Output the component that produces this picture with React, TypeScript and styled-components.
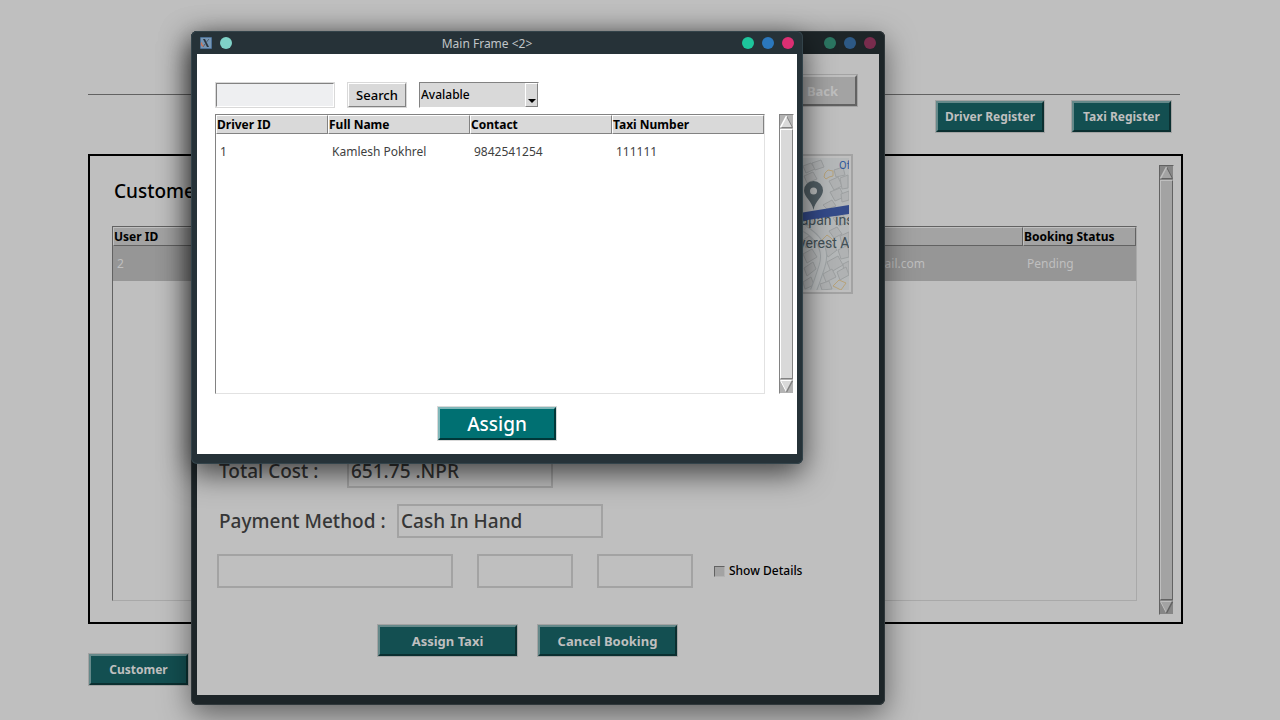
import React from "react";
import styled, { createGlobalStyle, css } from "styled-components";

interface Palette {
  face: string;
  light: string;
  dark: string;
  trough: string;
  frame: string;
  base: string;
}

const active: Palette = {
  face: "#d9d9d9",
  light: "#ffffff",
  dark: "#828282",
  trough: "#b3b3b3",
  frame: "#e2e2e2",
  base: "#ffffff",
};

const dimmed: Palette = {
  face: "#a3a3a3",
  light: "#bfbfbf",
  dark: "#626262",
  trough: "#868686",
  frame: "#a9a9a9",
  base: "#bfbfbf",
};

const GlobalStyle = createGlobalStyle`
  *, *::before, *::after { box-sizing: border-box; }
  body {
    margin: 0;
    background: #bfbfbf;
    color: #000;
    font-family: "Noto Sans", sans-serif;
    font-size: 12px;
    line-height: 16px;
  }
  button, input, select { font: inherit; color: inherit; margin: 0; border-radius: 0; }
`;

const Desktop = styled.div`
  position: relative;
  min-height: 100vh;
  overflow: hidden;
`;

const Page = styled.main`
  display: flex;
  flex-direction: column;
  padding: 0 97px 34px 88px;
`;

const PageHeader = styled.header`
  height: 95px;
  margin-right: 3px;
  border-bottom: 1px solid #626262;
`;

const Actions = styled.nav`
  display: flex;
  justify-content: flex-end;
  gap: 26px;
  padding: 5px 11px 21px 0;
`;

const TealButton = styled.button<{ $width: number; $size?: number; $weight?: number; $live?: boolean }>`
  width: ${(p) => p.$width}px;
  height: ${(p) => (p.$live ? 33 : 31)}px;
  margin: 1px;
  padding: 0;
  border: 2px solid;
  border-color: ${(p) =>
    p.$live ? "#7fb7b9 #003839 #003839 #7fb7b9" : "#65898a #0b2f30 #0b2f30 #65898a"};
  outline: 1px solid ${(p) => (p.$live ? "#d9d9d9" : "#a3a3a3")};
  background: ${(p) => (p.$live ? "#007072" : "#134f51")};
  color: ${(p) => (p.$live ? "#fff" : "#bfbfbf")};
  font-size: ${(p) => p.$size ?? 12}px;
  font-weight: ${(p) => p.$weight ?? 700};
  line-height: 20px;
`;

const Panel = styled.section`
  display: flex;
  gap: 22px;
  padding: 9px 7px 7px 22px;
  border: 2px solid #000;
`;

const PanelBody = styled.div`
  flex: 1;
  display: flex;
  flex-direction: column;
  padding-bottom: 14px;
`;

const PanelTitle = styled.h1`
  margin: 0 0 9px 2px;
  font-size: 19px;
  font-weight: 500;
  line-height: 52px;
`;

const PageFooter = styled.footer`
  padding-top: 29px;
`;

const TableFrame = styled.div<{ $p: Palette }>`
  flex: 1;
  border: 1px solid;
  border-color: ${({ $p }) => `${$p.dark} ${$p.frame} ${$p.frame} ${$p.dark}`};
  background: ${({ $p }) => $p.base};
`;

const Table = styled.table`
  width: 100%;
  table-layout: fixed;
  border-collapse: separate;
  border-spacing: 0;
`;

const HeadCell = styled.th<{ $p: Palette; $width?: number }>`
  ${(p) => p.$width && css`width: ${p.$width}px;`}
  height: 19px;
  padding: 0;
  border: 1px solid;
  border-color: ${({ $p }) => `${$p.light} ${$p.dark} ${$p.dark} ${$p.light}`};
  background: ${({ $p }) => $p.face};
  text-align: left;
  font-weight: 700;
  line-height: 17px;
  white-space: nowrap;
`;

const Cell = styled.td<{ $selected?: boolean; $end?: boolean }>`
  height: 35px;
  padding: ${(p) => (p.$end ? "0 98px 0 4px" : "0 4px")};
  text-align: ${(p) => (p.$end ? "right" : "left")};
  color: ${(p) => (p.$selected ? "#bfbfbf" : "#3f3f3f")};
  background: ${(p) => (p.$selected ? "#969696" : "transparent")};
  white-space: nowrap;
`;

const ScrollTrack = styled.div<{ $p: Palette; $length: number }>`
  display: flex;
  flex-direction: column;
  flex: none;
  width: 15px;
  min-height: ${(p) => p.$length}px;
  border: 1px solid;
  border-color: ${({ $p }) => `${$p.dark} ${$p.light} ${$p.light} ${$p.dark}`};
  background: ${({ $p }) => $p.trough};
`;

const ScrollArrow = styled.button`
  display: block;
  height: 14px;
  padding: 0;
  border: 0;
  background: none;

  svg { display: block; }
`;

const ScrollThumb = styled.div<{ $p: Palette }>`
  flex: 1;
  border: 1px solid;
  border-color: ${({ $p }) => `${$p.light} ${$p.dark} ${$p.dark} ${$p.light}`};
  background: ${({ $p }) => $p.face};
`;

function Scrollbar({ palette: p, length }: { palette: Palette; length: number }) {
  return (
    <ScrollTrack $p={p} $length={length}>
      <ScrollArrow type="button" aria-label="Scroll up">
        <svg width="13" height="14" viewBox="0 0 13 14">
          <path d="M6.5 1L12.5 12.5H.5z" fill={p.face} />
          <path d="M6.5 1l6 11.500H.5" stroke={p.dark} fill="none" />
          <path d="M.5 12.500L6.500 1" stroke={p.light} fill="none" strokeWidth="1.500" />
        </svg>
      </ScrollArrow>
      <ScrollThumb $p={p} />
      <ScrollArrow type="button" aria-label="Scroll down">
        <svg width="13" height="14" viewBox="0 0 13 14">
          <path d="M.5 1.5h12L6.5 13z" fill={p.face} />
          <path d="M6.5 13L.5 1.5h12" stroke={p.light} fill="none" />
          <path d="M12.5 1.5L6.5 13" stroke={p.dark} fill="none" strokeWidth="1.5" />
        </svg>
      </ScrollArrow>
    </ScrollTrack>
  );
}

const Window = styled.section<{ $dim?: boolean }>`
  position: absolute;
  top: 31px;
  left: 191px;
  padding: 0 6px 10px;
  border-radius: 6px;
  background: ${(p) => (p.$dim ? "#1d2528" : "#263238")};
  box-shadow: inset 0 0 0 1px ${(p) => (p.$dim ? "#30383b" : "#33434a")},
    0 9px 30px rgba(0, 0, 0, ${(p) => (p.$dim ? 0.5 : 0.68)});
`;

const TitleBar = styled.header`
  display: flex;
  align-items: center;
  height: 23px;
  padding: 0 3px;
  color: #c0c5c8;
`;

const WindowTitle = styled.h2`
  flex: 1;
  margin: 0;
  padding-top: 2px;
  text-align: center;
  font-size: 12px;
  font-weight: 400;
  line-height: 22px;
`;

const Controls = styled.div`
  display: flex;
  align-items: center;
  gap: 8px;
`;

const Dot = styled.button<{ $color: string }>`
  width: 12px;
  height: 12px;
  padding: 0;
  border: 0;
  background: ${(p) => p.$color};

  && { border-radius: 50%; }
`;

function XLogo() {
  return (
    <svg width="12" height="12" viewBox="0 0 12 12" aria-hidden="true">
      <rect width="12" height="12" rx="1" fill="#4d7095" />
      <rect x="1" y="1" width="10" height="10" fill="#7596b5" />
      <path d="M3 2h2l4 8H7z" fill="#2c3640" />
      <path d="M9 2L6.500 5M5 7L3 10" stroke="#4a5866" strokeWidth="0.900" />
      <path d="M1.500 5.500Q1 8.500 3.500 9" stroke="#cf7355" strokeWidth="1.300" fill="none" />
    </svg>
  );
}

const BookingBody = styled.div`
  display: flex;
  flex-direction: column;
  width: 682px;
  padding: 20px 21px 38px 20px;
  background: #bfbfbf;
  color: #363636;
`;

const BackButton = styled.button`
  align-self: flex-end;
  width: 69px;
  height: 31px;
  margin: 1px;
  padding: 0;
  border: 2px solid;
  border-color: #bfbfbf #626262 #626262 #bfbfbf;
  outline: 1px solid #a3a3a3;
  background: #a3a3a3;
  color: #bfbfbf;
  font-size: 13px;
  font-weight: 700;
`;

const MapFrame = styled.div`
  align-self: flex-end;
  margin: 47px 5px 160px 0;
  padding: 2px;
  border: 2px solid #a3a3a3;

  svg { display: block; }
`;

const Fields = styled.div`
  display: flex;
  flex-direction: column;
  gap: 16px;
`;

const FieldRow = styled.div`
  display: flex;
  align-items: center;
`;

const FieldLabel = styled.label<{ $width: number }>`
  width: ${(p) => p.$width}px;
  padding-left: 2px;
  font-size: 19px;
  font-weight: 500;
  line-height: 30px;
`;

const Field = styled.input<{ $width: number }>`
  width: ${(p) => p.$width}px;
  height: 34px;
  padding: 0 2px;
  border: 2px solid #a3a3a3;
  background: transparent;
  outline: none;
  font-size: 19px;
  font-weight: 500;
`;

const EntryRow = styled(FieldRow)`
  gap: 24px;
`;

const CheckLabel = styled.label`
  display: flex;
  align-items: center;
  gap: 4px;
  margin-left: -3px;
  color: #000;
  font-weight: 500;
`;

const CheckBox = styled.input`
  appearance: none;
  width: 11px;
  height: 11px;
  border: 1px solid;
  border-color: #626262 #b3b3b3 #b3b3b3 #626262;
  background: #a3a3a3;
`;

const BookingActions = styled.div`
  display: flex;
  justify-content: center;
  gap: 19px;
  padding: 36px 20px 0 0;
`;

const AssignBody = styled.form`
  display: flex;
  flex-direction: column;
  align-items: center;
  width: 600px;
  padding: 28px 3px 13px 18px;
  background: #fff;
`;

const SearchRow = styled.div`
  display: flex;
  align-self: stretch;
  gap: 12px;
  margin-bottom: 6px;
`;

const SearchField = styled.input`
  width: 118px;
  height: 24px;
  margin: 1px;
  padding: 0 2px;
  border: 1px solid;
  border-color: #828282 #fff #fff #828282;
  outline: 1px solid #d9d9d9;
  background: #eeeff1;
`;

const SearchButton = styled.button`
  width: 58px;
  height: 24px;
  margin: 1px;
  padding: 0;
  border: 1px solid;
  border-color: #fff #828282 #828282 #fff;
  outline: 1px solid #d9d9d9;
  background: #d9d9d9;
  font-size: 13px;
  font-weight: 500;
`;

const Combo = styled.div`
  position: relative;
  width: 120px;
  height: 26px;
`;

const ComboSelect = styled.select`
  appearance: none;
  width: 100%;
  height: 100%;
  padding: 0 16px 0 1px;
  border: 1px solid;
  border-color: #828282 #fff #fff #828282;
  background: #d9d9d9;
  font-weight: 500;
`;

const ComboArrow = styled.span`
  position: absolute;
  top: 1px;
  right: 1px;
  display: flex;
  align-items: flex-end;
  justify-content: center;
  width: 13px;
  height: 24px;
  padding-bottom: 3px;
  border: 1px solid;
  border-color: #fff #828282 #828282 #fff;
  background: #d9d9d9;
  pointer-events: none;
`;

const ListRow = styled.div`
  display: flex;
  align-self: stretch;
  gap: 14px;
  margin-bottom: 12px;
`;

const AssignAction = styled.div`
  padding-right: 15px;
`;

const roofs = [
  "M146 8l8-3 4 6-9 4z", "M155 5l9-3 3 7-9 3z", "M147 18l9-4 4 7-10 4z", "M177 12l9-3 2 8-9 2z",
  "M150 27l6-3 2 6-5 3z", "M172 23l9-4 4 9-8 4z", "M183 20l8-3v13l-6 1z", "M173 34l10-4 4 9-9 4z",
  "M184 36l8-3v9l-7 2z", "M166 47l9-5 4 6-9 3z", "M176 60l9-4 6 8-9 4z", "M147 62l7-3 3 6-8 3z",
  "M172 73l8-4 5 7-8 4z", "M183 78l9-4v10l-7 3z", "M166 90l8-6 6 8-9 7z", "M181 92l10-5 1 12-8 2z",
  "M170 104l11-6 5 9-12 7z", "M186 106l6-3v11l-5 2z", "M166 116l9-5 4 8-10 5z",
  "M180 114l9-5 3 8-9 5z", "M163 126l9-3 3 8-10 1z", "M146 82l6-4 5 6-8 6z",
  "M146 96l9-5 5 8-10 6z", "M147 110l9-6 3 7-9 7z", "M146 124l8-5 3 8-9 4z",
];

function RouteMap() {
  return (
    <svg width="192" height="132" viewBox="0 0 192 132" role="img" aria-label="Route map">
      <rect width="192" height="132" fill="#b5b8b9" />
      <g fill="#b0b2b3" stroke="#9da0a1" strokeWidth="1">
        {roofs.map((d) => (
          <path key={d} d={d} />
        ))}
      </g>
      <path d="M148 71Q172 86 165 108T156 133" fill="none" stroke="#9fa4a6" strokeWidth="7" />
      <path d="M148 71Q172 86 165 108T156 133" fill="none" stroke="#b9bcbd" strokeWidth="5" />
      <g fill="none" stroke="#b7a279">
        <path d="M168 15l3-3 5 1v5l-4 1-3 2-2-2z" />
        <path d="M165 82l5-5 4 3 3 3" />
        <path d="M176 128l6-6 7 3-5 7z" />
      </g>
      <text x="182" y="11" fill="#315a9d" fontFamily="Roboto" fontSize="11">Of</text>
      <text x="136" y="67" fill="#414f55" fontFamily="Roboto" fontSize="14">Japan ins</text>
      <text x="134" y="90" fill="#414f55" fontFamily="Roboto" fontSize="14">Everest A</text>
      <path d="M130 57L192 47v9l-62 9z" fill="#344b8a" />
      <path
        d="M156.500 52C155 43 147 39 147 32.500a9.500 9.500 0 0 1 19 0C166 39 158 43 156.500 52z"
        fill="#515e64"
      />
      <circle cx="156.500" cy="33" r="3.500" fill="#b9bbbb" />
    </svg>
  );
}

const drivers = [["1", "Kamlesh Pokhrel", "9842541254", "111111"]];

export default function App() {
  return (
    <Desktop>
      <GlobalStyle />
      <Page>
        <PageHeader />
        <Actions>
          <TealButton type="button" $width={108}>Driver Register</TealButton>
          <TealButton type="button" $width={99}>Taxi Register</TealButton>
        </Actions>
        <Panel>
          <PanelBody>
            <PanelTitle>Customer</PanelTitle>
            <TableFrame $p={dimmed}>
              <Table>
                <thead>
                  <tr>
                    <HeadCell $p={dimmed} $width={112}>User ID</HeadCell>
                    <HeadCell $p={dimmed} aria-label="Email" />
                    <HeadCell $p={dimmed} $width={113}>Booking Status</HeadCell>
                  </tr>
                </thead>
                <tbody>
                  <tr>
                    <Cell $selected>2</Cell>
                    <Cell $selected $end>gmail.com</Cell>
                    <Cell $selected>Pending</Cell>
                  </tr>
                </tbody>
              </Table>
            </TableFrame>
          </PanelBody>
          <Scrollbar palette={dimmed} length={450} />
        </Panel>
        <PageFooter>
          <TealButton type="button" $width={99}>Customer</TealButton>
        </PageFooter>
      </Page>

      <Window $dim>
        <TitleBar>
          <WindowTitle />
          <Controls>
            <Dot type="button" aria-label="Minimize" $color="#2b7561" />
            <Dot type="button" aria-label="Maximize" $color="#2d5985" />
            <Dot type="button" aria-label="Close" $color="#782c4d" />
          </Controls>
        </TitleBar>
        <BookingBody>
          <BackButton type="button">Back</BackButton>
          <MapFrame>
            <RouteMap />
          </MapFrame>
          <Fields>
            <FieldRow>
              <FieldLabel htmlFor="cost" $width={130}>Total Cost :</FieldLabel>
              <Field id="cost" $width={206} readOnly value="651.75 .NPR" />
            </FieldRow>
            <FieldRow>
              <FieldLabel htmlFor="method" $width={180}>Payment Method :</FieldLabel>
              <Field id="method" $width={206} readOnly value="Cash In Hand" />
            </FieldRow>
            <EntryRow>
              <Field aria-label="Driver" $width={236} />
              <Field aria-label="Contact" $width={96} />
              <Field aria-label="Taxi" $width={96} />
              <CheckLabel>
                <CheckBox type="checkbox" />
                Show Details
              </CheckLabel>
            </EntryRow>
          </Fields>
          <BookingActions>
            <TealButton type="button" $width={139} $size={13}>Assign Taxi</TealButton>
            <TealButton type="button" $width={139} $size={13}>Cancel Booking</TealButton>
          </BookingActions>
        </BookingBody>
      </Window>

      <Window>
        <TitleBar>
          <Controls>
            <XLogo />
            <Dot type="button" aria-label="Pin" $color="#80d2c8" />
          </Controls>
          <WindowTitle>Main Frame &lt;2&gt;</WindowTitle>
          <Controls>
            <Dot type="button" aria-label="Minimize" $color="#1dc59c" />
            <Dot type="button" aria-label="Maximize" $color="#2b78bd" />
            <Dot type="button" aria-label="Close" $color="#dc2f73" />
          </Controls>
        </TitleBar>
        <AssignBody>
          <SearchRow>
            <SearchField type="text" aria-label="Search drivers" />
            <SearchButton type="button">Search</SearchButton>
            <Combo>
              <ComboSelect aria-label="Driver status">
                <option>Avalable</option>
              </ComboSelect>
              <ComboArrow>
                <svg width="8" height="4" viewBox="0 0 8 4" aria-hidden="true">
                  <path d="M0 0h8L4 4z" fill="#000" />
                </svg>
              </ComboArrow>
            </Combo>
          </SearchRow>
          <ListRow>
            <TableFrame $p={active}>
              <Table>
                <thead>
                  <tr>
                    <HeadCell $p={active} $width={112}>Driver ID</HeadCell>
                    <HeadCell $p={active} $width={142}>Full Name</HeadCell>
                    <HeadCell $p={active} $width={142}>Contact</HeadCell>
                    <HeadCell $p={active}>Taxi Number</HeadCell>
                  </tr>
                </thead>
                <tbody>
                  {drivers.map((row) => (
                    <tr key={row[0]}>
                      {row.map((value) => (
                        <Cell key={value}>{value}</Cell>
                      ))}
                    </tr>
                  ))}
                </tbody>
              </Table>
            </TableFrame>
            <Scrollbar palette={active} length={280} />
          </ListRow>
          <AssignAction>
            <TealButton type="button" $width={118} $size={19} $weight={500} $live>Assign</TealButton>
          </AssignAction>
        </AssignBody>
      </Window>
    </Desktop>
  );
}
